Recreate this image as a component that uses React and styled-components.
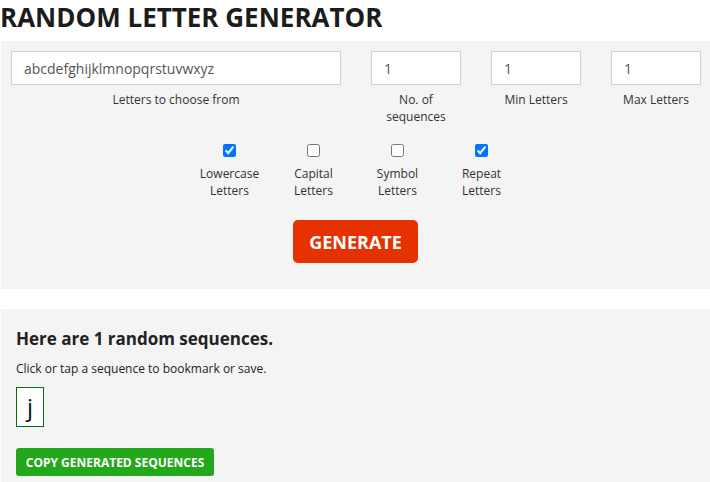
import React from 'react';
import styled, { createGlobalStyle } from 'styled-components';

const Global = createGlobalStyle`
  body {
    margin: 0;
    background: #fff;
    font-family: "Open Sans", "Liberation Sans", sans-serif;
    color: #222;
  }
`;

const Page = styled.div`
  padding-left: 1px;
  overflow: hidden;
`;

const Title = styled.h1`
  margin: 0;
  height: 41px;
  margin-left: -1px;
  font-size: 26px;
  font-weight: 700;
  line-height: 35px;
  color: #1c1c1c;
`;

const Panel = styled.div`
  background: #f4f4f4;
  padding: ${p => p.$pad};
  margin-bottom: ${p => p.$gap || 0}px;
`;

const Fields = styled.div`
  display: grid;
  grid-template-columns: 330px 90px 90px 90px;
  column-gap: 30px;
`;

const Field = styled.div`
  display: flex;
  flex-direction: column;
  align-items: stretch;
`;

const Input = styled.input`
  box-sizing: border-box;
  height: 34px;
  width: 100%;
  border: 1px solid #cfcfcf;
  background: #fff;
  padding: 0 12px;
  font-family: inherit;
  font-size: 14px;
  color: #555;
  outline: none;
`;

const Label = styled.div`
  margin-top: 6px;
  text-align: center;
  font-size: 12px;
  line-height: 17px;
  color: #333;
`;

const Checks = styled.div`
  display: flex;
  justify-content: center;
  margin-top: 19px;
`;

const Check = styled.label`
  width: 84px;
  display: flex;
  flex-direction: column;
  align-items: center;

  input {
    margin: 0;
    width: 13px;
    height: 13px;
  }

  span {
    margin-top: 8px;
    text-align: center;
    font-size: 12px;
    line-height: 17px;
    color: #333;
  }
`;

const Center = styled.div`
  display: flex;
  justify-content: center;
  margin-top: 21px;
`;

const Generate = styled.button`
  width: 125px;
  height: 43px;
  border: none;
  border-radius: 5px;
  background: #e63200;
  color: #fff;
  font-family: inherit;
  font-weight: 700;
  font-size: 18px;
  cursor: pointer;
`;

const ResultTitle = styled.h2`
  margin: 0;
  font-size: 17px;
  font-weight: 700;
  line-height: 24px;
  color: #222;
`;

const Hint = styled.p`
  margin: 9px 0 0;
  font-size: 12px;
  line-height: 17px;
  color: #222;
`;

const Sequences = styled.div`
  display: flex;
  gap: 8px;
  margin-top: 10px;
`;

const Sequence = styled.div`
  box-sizing: border-box;
  height: 40px;
  padding: 0 10px;
  border: 1px solid #0b6a0b;
  background: #fff;
  font-size: 24px;
  line-height: 37px;
  color: #111;
`;

const CopyButton = styled.button`
  display: block;
  margin-top: 21px;
  width: 198px;
  height: 28px;
  border: none;
  border-radius: 3px;
  background: #22a81a;
  color: #fff;
  font-family: inherit;
  font-weight: 700;
  font-size: 12px;
`;

const checks = [
  { label: 'Lowercase Letters', on: true },
  { label: 'Capital Letters', on: false },
  { label: 'Symbol Letters', on: false },
  { label: 'Repeat Letters', on: true },
];

export default function App() {
  return (
    <Page>
      <Global />
      <Title>RANDOM LETTER GENERATOR</Title>
      <Panel $pad="10px 10px 26px" $gap={20}>
        <Fields>
          <Field>
            <Input defaultValue="abcdefghijklmnopqrstuvwxyz" />
            <Label>Letters to choose from</Label>
          </Field>
          <Field>
            <Input defaultValue="1" />
            <Label>No. of<br />sequences</Label>
          </Field>
          <Field>
            <Input defaultValue="1" />
            <Label>Min Letters</Label>
          </Field>
          <Field>
            <Input defaultValue="1" />
            <Label>Max Letters</Label>
          </Field>
        </Fields>
        <Checks>
          {checks.map(c => {
            const [a, b] = c.label.split(' ');
            return (
              <Check key={c.label}>
                <input type="checkbox" defaultChecked={c.on} />
                <span>{a}<br />{b}</span>
              </Check>
            );
          })}
        </Checks>
        <Center>
          <Generate>GENERATE</Generate>
        </Center>
      </Panel>
      <Panel $pad="18px 15px 10px">
        <ResultTitle>Here are 1 random sequences.</ResultTitle>
        <Hint>Click or tap a sequence to bookmark or save.</Hint>
        <Sequences>
          <Sequence>j</Sequence>
        </Sequences>
        <CopyButton>COPY GENERATED SEQUENCES</CopyButton>
      </Panel>
    </Page>
  );
}
